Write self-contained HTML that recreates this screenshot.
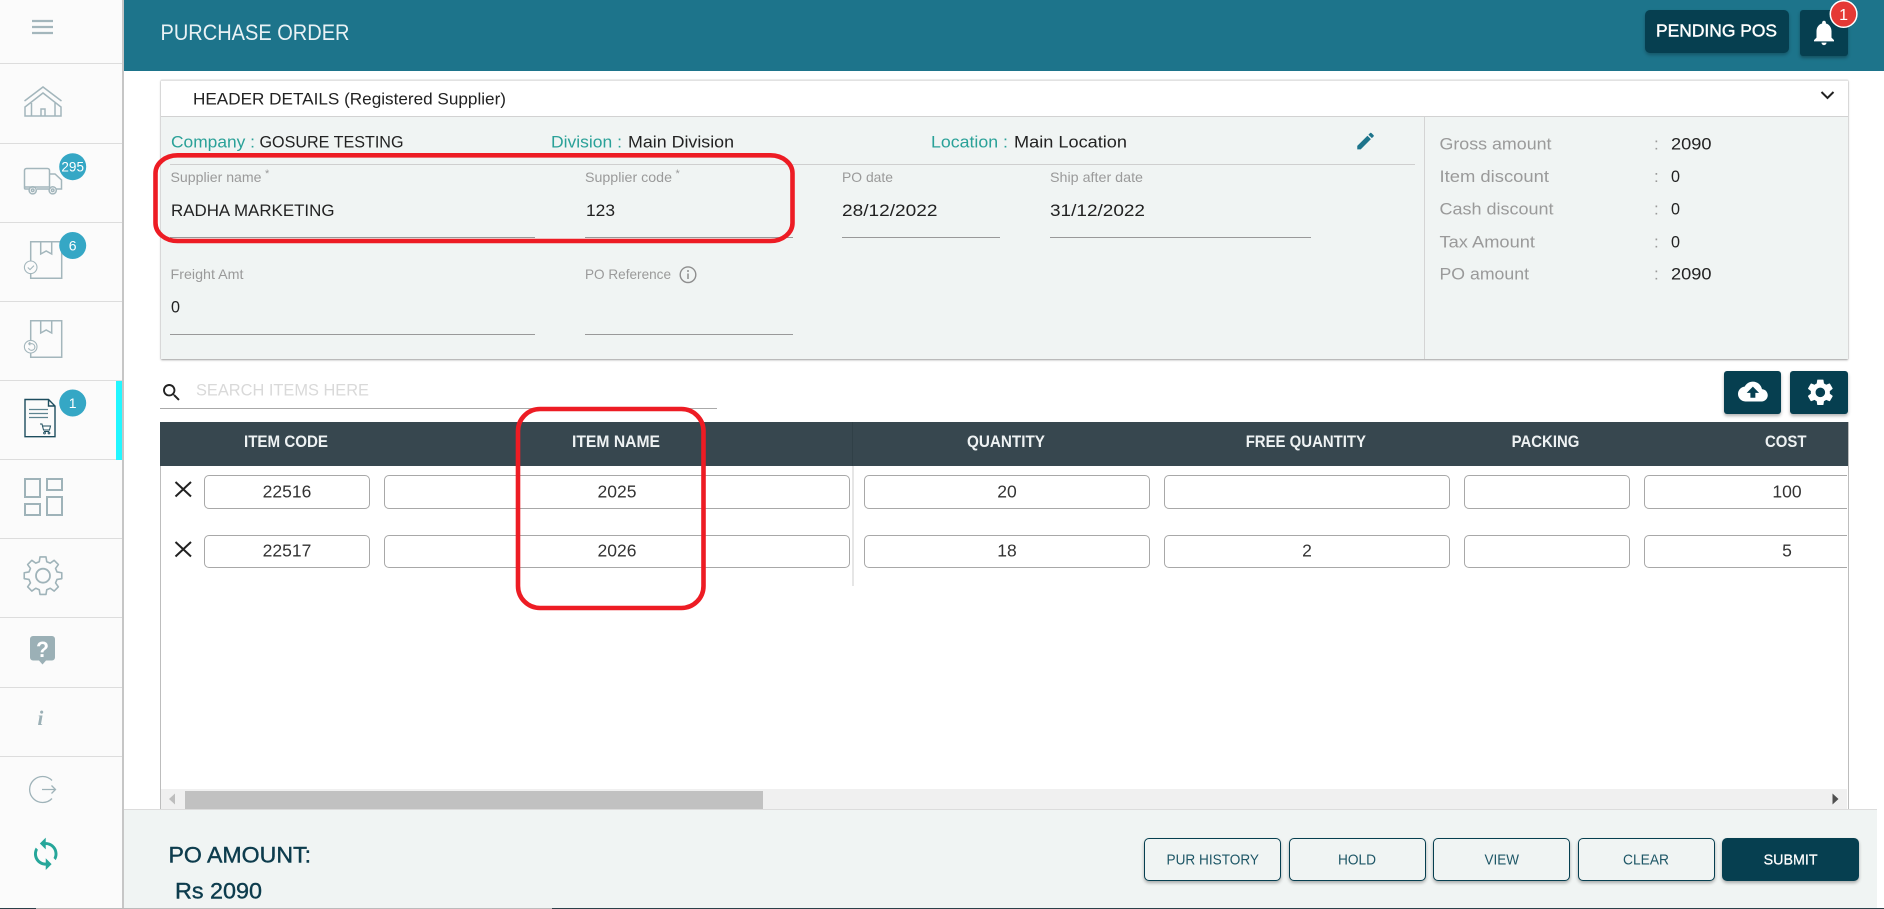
<!DOCTYPE html>
<html lang="en"><head><meta charset="utf-8"><title>Purchase Order</title>
<style>
html,body{margin:0;padding:0;background:#fff}
body{position:relative;width:1884px;height:909px;overflow:hidden;font-family:"Liberation Sans",sans-serif}
.a{position:absolute;box-sizing:border-box}
.in{position:absolute;box-sizing:border-box;background:#fff;border:1px solid #a8a8a8;border-radius:5px}
.btn{position:absolute;box-sizing:border-box;top:838px;height:43px;border:1px solid #063f50;border-radius:5px;background:#f0f4f3;box-shadow:0 2px 3px rgba(0,0,0,.3)}
svg{position:absolute;left:0;top:0}
text{font-family:"Liberation Sans",sans-serif}
</style></head><body>
<!-- sidebar -->
<div class="a" style="left:0;top:0;width:122px;height:909px;background:#fbfbfb"></div>
<div class="a" style="left:122px;top:0;width:2px;height:909px;background:#c6c6c6"></div>
<div class="a" style="left:0;top:63px;width:122px;height:1px;background:#ddd"></div>
<div class="a" style="left:0;top:143px;width:122px;height:1px;background:#ddd"></div>
<div class="a" style="left:0;top:222px;width:122px;height:1px;background:#ddd"></div>
<div class="a" style="left:0;top:301px;width:122px;height:1px;background:#ddd"></div>
<div class="a" style="left:0;top:380px;width:122px;height:1px;background:#ddd"></div>
<div class="a" style="left:0;top:459px;width:122px;height:1px;background:#ddd"></div>
<div class="a" style="left:0;top:538px;width:122px;height:1px;background:#ddd"></div>
<div class="a" style="left:0;top:617px;width:122px;height:1px;background:#ddd"></div>
<div class="a" style="left:0;top:687px;width:122px;height:1px;background:#ddd"></div>
<div class="a" style="left:0;top:756px;width:122px;height:1px;background:#ddd"></div>
<div class="a" style="left:116px;top:381px;width:6px;height:79px;background:#22f6ff"></div>
<!-- header -->
<div class="a" style="left:124px;top:0;width:1760px;height:71px;background:#1d748b"></div>
<div class="a" style="left:1645px;top:10px;width:144px;height:43px;background:#063f50;border-radius:5px;box-shadow:0 2px 3px rgba(0,0,0,.25)"></div>
<div class="a" style="left:1800px;top:10px;width:48px;height:46px;background:#063f50;border-radius:3px;box-shadow:0 2px 3px rgba(0,0,0,.3)"></div>
<!-- card -->
<div class="a" style="left:161px;top:80px;width:1687px;height:279px;background:#f0f4f3;box-shadow:0 1px 2px rgba(0,0,0,.35),0 0 1px rgba(0,0,0,.25)"></div>
<div class="a" style="left:161px;top:80px;width:1687px;height:37px;background:#fff;border-top:1px solid #e2e2e2;border-bottom:1px solid #d2d2d2"></div>
<div class="a" style="left:170px;top:164px;width:1245px;height:1px;background:#cfcfcf"></div>
<div class="a" style="left:1424px;top:117px;width:1px;height:242px;background:#d4d4d4"></div>
<div class="a" style="left:170px;top:237px;width:365px;height:1px;background:#999"></div>
<div class="a" style="left:585px;top:237px;width:208px;height:1px;background:#999"></div>
<div class="a" style="left:842px;top:237px;width:158px;height:1px;background:#999"></div>
<div class="a" style="left:1050px;top:237px;width:261px;height:1px;background:#999"></div>
<div class="a" style="left:170px;top:334px;width:365px;height:1px;background:#999"></div>
<div class="a" style="left:585px;top:334px;width:208px;height:1px;background:#999"></div>
<!-- search + action buttons -->
<div class="a" style="left:160px;top:408px;width:557px;height:1px;background:#aaa"></div>
<div class="a" style="left:1724px;top:371px;width:57px;height:43px;background:#063f50;border-radius:3px;box-shadow:0 2px 3px rgba(0,0,0,.3)"></div>
<div class="a" style="left:1790px;top:371px;width:58px;height:43px;background:#063f50;border-radius:3px;box-shadow:0 2px 3px rgba(0,0,0,.3)"></div>
<!-- table -->
<div class="a" style="left:160px;top:422px;width:1px;height:387px;background:#bdbdbd"></div>
<div class="a" style="left:1848px;top:422px;width:1px;height:387px;background:#bdbdbd"></div>
<div class="a" style="left:160px;top:422px;width:1688px;height:44px;background:#37474f"></div>
<div class="a" style="left:852px;top:422px;width:1px;height:44px;background:#304047"></div>
<div class="a" style="left:852px;top:466px;width:2px;height:120px;background:#e6e6e6"></div>
<div class="in" style="left:204px;top:475px;width:166px;height:34px"></div>
<div class="in" style="left:384px;top:475px;width:466px;height:34px"></div>
<div class="in" style="left:864px;top:475px;width:286px;height:34px"></div>
<div class="in" style="left:1164px;top:475px;width:286px;height:34px"></div>
<div class="in" style="left:1464px;top:475px;width:166px;height:34px"></div>
<div class="in" style="left:1644px;top:475px;width:210px;height:34px"></div>
<div class="in" style="left:204px;top:535px;width:166px;height:33px"></div>
<div class="in" style="left:384px;top:535px;width:466px;height:33px"></div>
<div class="in" style="left:864px;top:535px;width:286px;height:33px"></div>
<div class="in" style="left:1164px;top:535px;width:286px;height:33px"></div>
<div class="in" style="left:1464px;top:535px;width:166px;height:33px"></div>
<div class="in" style="left:1644px;top:535px;width:210px;height:33px"></div>
<div class="a" style="left:1847px;top:466px;width:37px;height:343px;background:#fff"></div>
<div class="a" style="left:1848px;top:466px;width:1px;height:343px;background:#bdbdbd"></div>
<!-- scrollbar -->
<div class="a" style="left:161px;top:789px;width:1686px;height:20px;background:#f0f0f0"></div>
<div class="a" style="left:185px;top:791px;width:578px;height:18px;background:#c1c1c1"></div>
<!-- footer -->
<div class="a" style="left:124px;top:809px;width:1753px;height:99px;background:#f0f4f3;border-top:1px solid #dcdcdc"></div>
<div class="btn" style="left:1144px;width:137px"></div>
<div class="btn" style="left:1289px;width:137px"></div>
<div class="btn" style="left:1433px;width:137px"></div>
<div class="btn" style="left:1578px;width:137px"></div>
<div class="btn" style="left:1722px;width:137px;background:#063f50"></div>
<div class="a" style="left:0;top:908px;width:1884px;height:1px;background:#2b4149"></div>
<div class="a" style="left:36px;top:908px;width:516px;height:1px;background:#bbb"></div>

<svg width="1884" height="909" viewBox="0 0 1884 909" xmlns="http://www.w3.org/2000/svg">
<!-- sidebar icons -->
<g fill="none" stroke="#a3b6bc" stroke-width="1.5">
<path d="M32 21h21M32 27h21M32 33h21" stroke-width="2.2"/>
<path d="M24.500 101L43 87l18.500 14M25 116v-9l18-14 18 14v9zM31.500 103v13M55 103v13M41 116v-7h4v7"/>
<path d="M26.500 168.500h21a2 2 0 0 1 2 2v16.500h-25v-16.500a2 2 0 0 1 2-2zM50 174h5l6.500 6v9h-5M50 187v2M24.500 186v2a1 1 0 0 0 1 1h3.500M37 189h12"/>
<circle cx="32.700" cy="190.300" r="3.600"/><circle cx="32.700" cy="190.300" r="1.300"/><circle cx="52.700" cy="190.300" r="3.600"/><circle cx="52.700" cy="190.300" r="1.300"/>
<path d="M30.700 241.700H61.700V278.300H30.700zM40.700 241.700V254L46.200 251L51.700 254V241.700"/>
<circle cx="30.700" cy="267.300" r="6.300" fill="#fbfbfb" stroke-width="1.100"/><path d="M27.800 267.500l2.200 2.100 4-4" stroke-width="1.100"/>
<path d="M30.700 320.700H61.700V357.300H30.700zM40.700 320.700V333L46.200 330L51.700 333V320.700"/>
<circle cx="30.700" cy="346.700" r="6.300" fill="#fbfbfb" stroke-width="1.100"/><path d="M28.500 343.700h3a3.300 3.300 0 1 1-3 4.500M28.500 343.700l1.800-1.500M28.500 343.700l1.800 1.500" stroke-width="1.100"/>
</g>
<g fill="none" stroke="#1d4d5e" stroke-width="1.400">
<path d="M25 399.500H48.500L55 406V436.700H25zM48.500 399.500V406H55"/>
<path d="M29 409.500H48M29 413.500H48M29 417.500H48" stroke="#5d8490" stroke-width="1.300"/>
<path d="M40 424h2l1.500 6h6l1-4h-7.500M44 431.500h5" stroke-width="1"/><circle cx="44.500" cy="433" r=".9" stroke-width=".9"/><circle cx="49" cy="433" r=".9" stroke-width=".9"/>
</g>
<g fill="none" stroke="#9fb3b9" stroke-width="2">
<rect x="25" y="479" width="15" height="18"/><rect x="47" y="479" width="15" height="11"/><rect x="25" y="504" width="15" height="11"/><rect x="47" y="497" width="15" height="18"/>
<path transform="translate(43 575.700)" stroke-width="1.600" stroke-linejoin="round" d="M14 -3.750L18.770 -2.970L18.770 2.970L14 3.750L12.560 7.250L15.370 11.170L11.170 15.370L7.250 12.560L3.750 14L2.970 18.770L-2.970 18.770L-3.750 14L-7.250 12.560L-11.170 15.370L-15.370 11.170L-12.560 7.250L-14 3.750L-18.770 2.970L-18.770 -2.970L-14 -3.750L-12.560 -7.250L-15.370 -11.170L-11.170 -15.370L-7.250 -12.560L-3.750 -14L-2.970 -18.770L2.970 -18.770L3.750 -14L7.250 -12.560L11.170 -15.370L15.370 -11.170L12.560 -7.250Z"/>
<circle cx="43" cy="575.700" r="7" stroke-width="1.800"/>
<path d="M52 780.500A13 13 0 1 0 52 798.500M42 789.500H55.500M51.500 785.500l4 4-4 4" stroke-width="1.300"/>
</g>
<path fill="#9bb0b6" d="M33 636h19a3 3 0 0 1 3 3v18.500a3 3 0 0 1-3 3h-6l-3.500 4-3.500-4h-6a3 3 0 0 1-3-3V639a3 3 0 0 1 3-3z"/>
<text x="36" y="657" font-size="22" font-weight="700" fill="#fff" textLength="13" lengthAdjust="spacingAndGlyphs">?</text>
<text x="37.500" y="725" font-size="21" font-weight="700" font-style="italic" fill="#9bb0b6" style="font-family:'Liberation Serif',serif">i</text>
<path fill="#26a69a" transform="translate(28.100 836.200) scale(1.470)" d="M12 4V1L8 5l4 4V6c3.310 0 6 2.690 6 6 0 1.010-.25 1.970-.7 2.800l1.460 1.460C19.540 15.030 20 13.570 20 12c0-4.420-3.580-8-8-8zm0 14c-3.310 0-6-2.690-6-6 0-1.010.25-1.970.7-2.800L5.240 7.740C4.460 8.970 4 10.430 4 12c0 4.420 3.580 8 8 8v3l4-4-4-4v3z"/>
<g fill="#35a7c5"><circle cx="72.700" cy="166.700" r="13.500"/><circle cx="72.700" cy="245.500" r="13.500"/><circle cx="72.700" cy="403" r="13.500"/></g>
<g fill="#fff" font-size="14" text-anchor="middle"><text x="72.700" y="171.500" font-size="13.500">295</text><text x="72.700" y="250.500">6</text><text x="72.700" y="408">1</text></g>

<!-- header -->
<text x="160.500" y="40" font-size="22" fill="#e9f2f5" textLength="189" lengthAdjust="spacingAndGlyphs">PURCHASE ORDER</text>
<text x="1656" y="36.700" font-size="17.500" fill="#fff" stroke="#fff" stroke-width=".4" textLength="121" lengthAdjust="spacingAndGlyphs">PENDING POS</text>
<path fill="#fff" transform="translate(1809 17.600) scale(1.250)" d="M12 22c1.100 0 2-.9 2-2h-4c0 1.100.89 2 2 2zm6-6v-5c0-3.070-1.640-5.640-4.500-6.320V4c0-.83-.67-1.500-1.500-1.500s-1.500.67-1.500 1.500v.68C7.630 5.360 6 7.920 6 11v5l-2 2v1h16v-1l-2-2z"/>
<circle cx="1843.600" cy="14" r="13.300" fill="#e53935" stroke="#fff" stroke-width="1.500"/>
<text x="1843.600" y="20" font-size="16" fill="#fff" text-anchor="middle">1</text>

<!-- card heading -->
<text x="193" y="104.500" font-size="17" fill="#222" textLength="313" lengthAdjust="spacingAndGlyphs">HEADER DETAILS (Registered Supplier)</text>
<path d="M1821.500 92l6 6 6-6" fill="none" stroke="#222" stroke-width="2"/>
<g font-size="17">
<text x="171" y="147.500" fill="#2aa198" textLength="84" lengthAdjust="spacingAndGlyphs">Company :</text>
<text x="259.500" y="147.500" fill="#222" textLength="144" lengthAdjust="spacingAndGlyphs">GOSURE TESTING</text>
<text x="551" y="147.500" fill="#2aa198" textLength="71" lengthAdjust="spacingAndGlyphs">Division :</text>
<text x="628" y="147.500" fill="#222" textLength="106" lengthAdjust="spacingAndGlyphs">Main Division</text>
<text x="931" y="147.500" fill="#2aa198" textLength="77" lengthAdjust="spacingAndGlyphs">Location :</text>
<text x="1014" y="147.500" fill="#222" textLength="113" lengthAdjust="spacingAndGlyphs">Main Location</text>
</g>
<path fill="#1d748b" transform="translate(1354.500 130) scale(.92)" d="M3 17.250V21h3.750L17.810 9.940l-3.750-3.750L3 17.250zM20.710 7.040c.39-.39.39-1.020 0-1.410l-2.340-2.340c-.39-.39-1.020-.39-1.410 0l-1.830 1.830 3.750 3.750 1.830-1.830z"/>

<!-- form labels -->
<g font-size="14" fill="#9a9a9a">
<text x="170.500" y="182" textLength="91" lengthAdjust="spacingAndGlyphs">Supplier name</text>
<text x="265" y="177" font-size="11">*</text>
<text x="585" y="182" textLength="87" lengthAdjust="spacingAndGlyphs">Supplier code</text>
<text x="675.500" y="177" font-size="11">*</text>
<text x="842" y="182" textLength="51" lengthAdjust="spacingAndGlyphs">PO date</text>
<text x="1050" y="182" textLength="93" lengthAdjust="spacingAndGlyphs">Ship after date</text>
<text x="170.500" y="279" textLength="73" lengthAdjust="spacingAndGlyphs">Freight Amt</text>
<text x="585" y="279" textLength="86" lengthAdjust="spacingAndGlyphs">PO Reference</text>
</g>
<circle cx="688" cy="274.700" r="7.800" fill="none" stroke="#8e8e8e" stroke-width="1.400"/>
<path d="M688 273.500v5.500M688 270v2" stroke="#8e8e8e" stroke-width="1.500" fill="none"/>
<g font-size="17" fill="#222">
<text x="171" y="215.800" textLength="163.500" lengthAdjust="spacingAndGlyphs">RADHA MARKETING</text>
<text x="586" y="215.800" textLength="29" lengthAdjust="spacingAndGlyphs">123</text>
<text x="842" y="215.800" textLength="95.500" lengthAdjust="spacingAndGlyphs">28/12/2022</text>
<text x="1050" y="215.800" textLength="95" lengthAdjust="spacingAndGlyphs">31/12/2022</text>
<text x="171" y="312.500" textLength="9" lengthAdjust="spacingAndGlyphs">0</text>
</g>
<!-- summary -->
<g font-size="17" fill="#9a9a9a">
<text x="1439.500" y="149.500" textLength="112" lengthAdjust="spacingAndGlyphs">Gross amount</text>
<text x="1439.500" y="182" textLength="109.500" lengthAdjust="spacingAndGlyphs">Item discount</text>
<text x="1439.500" y="214.500" textLength="114" lengthAdjust="spacingAndGlyphs">Cash discount</text>
<text x="1439.500" y="247.500" textLength="95.500" lengthAdjust="spacingAndGlyphs">Tax Amount</text>
<text x="1439.500" y="279.500" textLength="89.500" lengthAdjust="spacingAndGlyphs">PO amount</text>
<text x="1654" y="149.500">:</text><text x="1654" y="182">:</text><text x="1654" y="214.500">:</text><text x="1654" y="247.500">:</text><text x="1654" y="279.500">:</text>
</g>
<g font-size="17" fill="#222">
<text x="1671" y="149.500" textLength="40.500" lengthAdjust="spacingAndGlyphs">2090</text>
<text x="1671" y="182" textLength="9" lengthAdjust="spacingAndGlyphs">0</text><text x="1671" y="214.500" textLength="9" lengthAdjust="spacingAndGlyphs">0</text><text x="1671" y="247.500" textLength="9" lengthAdjust="spacingAndGlyphs">0</text>
<text x="1671" y="279.500" textLength="40.500" lengthAdjust="spacingAndGlyphs">2090</text>
</g>

<!-- search -->
<path fill="#222" transform="translate(160.200 381.200) scale(.95)" d="M15.500 14h-.79l-.28-.27C15.410 12.590 16 11.110 16 9.500 16 5.910 13.090 3 9.500 3S3 5.910 3 9.500 5.910 16 9.500 16c1.610 0 3.090-.59 4.230-1.570l.27.28v.79l5 4.990L20.490 19l-4.990-5zm-6 0C7.010 14 5 11.990 5 9.500S7.010 5 9.500 5 14 7.010 14 9.500 11.990 14 9.500 14z"/>
<text x="196" y="395.700" font-size="17" fill="#d9d9d9" textLength="173" lengthAdjust="spacingAndGlyphs">SEARCH ITEMS HERE</text>
<path fill="#fff" transform="translate(1738 376.700) scale(1.240)" d="M19.350 10.040C18.670 6.590 15.640 4 12 4 9.110 4 6.600 5.640 5.350 8.040 2.340 8.360 0 10.910 0 14c0 3.310 2.690 6 6 6h13c2.760 0 5-2.240 5-5 0-2.640-2.050-4.780-4.650-4.960zM14 13v4h-4v-4H7l5-5 5 5h-3z"/>
<path fill="#fff" transform="translate(1804.500 376.500) scale(1.320)" d="M19.140 12.940c.04-.3.06-.61.06-.94 0-.32-.02-.64-.07-.94l2.030-1.580c.18-.14.23-.41.12-.61l-1.920-3.320c-.12-.22-.37-.29-.59-.22l-2.390.96c-.5-.38-1.030-.7-1.620-.94l-.36-2.540c-.04-.24-.24-.41-.48-.41h-3.840c-.24 0-.43.17-.47.41l-.36 2.540c-.59.24-1.130.57-1.620.94l-2.390-.96c-.22-.08-.47 0-.59.22L2.740 8.870c-.12.21-.08.47.12.61l2.030 1.580c-.05.3-.09.63-.09.94s.02.64.07.94l-2.030 1.580c-.18.14-.23.41-.12.61l1.920 3.320c.12.22.37.29.59.22l2.390-.96c.5.38 1.030.7 1.620.94l.36 2.540c.05.24.24.41.48.41h3.840c.24 0 .44-.17.47-.41l.36-2.540c.59-.24 1.130-.56 1.620-.94l2.390.96c.22.08.47 0 .59-.22l1.920-3.320c.12-.22.07-.47-.12-.61l-2.010-1.580zM12 15.600c-1.980 0-3.600-1.620-3.600-3.600s1.620-3.600 3.600-3.600 3.600 1.620 3.600 3.600-1.620 3.600-3.600 3.600z"/>

<!-- table heads -->
<g font-size="16.500" font-weight="700" fill="#eef2f3">
<text x="244" y="447" textLength="84" lengthAdjust="spacingAndGlyphs">ITEM CODE</text>
<text x="572" y="447" textLength="88" lengthAdjust="spacingAndGlyphs">ITEM NAME</text>
<text x="967" y="447" textLength="78" lengthAdjust="spacingAndGlyphs">QUANTITY</text>
<text x="1245.700" y="447" textLength="120.300" lengthAdjust="spacingAndGlyphs">FREE QUANTITY</text>
<text x="1511.600" y="447" textLength="67.800" lengthAdjust="spacingAndGlyphs">PACKING</text>
<text x="1765" y="447" textLength="41.500" lengthAdjust="spacingAndGlyphs">COST</text>
</g>
<path d="M175.500 482l15.500 14.500M191 482l-15.500 14.500M175.500 542l15.500 14.500M191 542l-15.500 14.500" stroke="#222" stroke-width="2" fill="none"/>
<g font-size="17.500" fill="#333" text-anchor="middle">
<text x="287" y="497.500">22516</text><text x="617" y="497.500">2025</text><text x="1007" y="497.500">20</text><text x="1787" y="497.500">100</text>
<text x="287" y="556.500">22517</text><text x="617" y="556.500">2026</text><text x="1007" y="556.500">18</text><text x="1307" y="556.500">2</text><text x="1787" y="556.500">5</text>
</g>
<path d="M175 796.500v11l-6-5.500z" fill="#bdbdbd" transform="translate(0 -3)"/>
<path d="M1832.500 796.500v11l6-5.500z" fill="#505050" transform="translate(0 -3)"/>

<!-- footer text -->
<g font-size="22.500" fill="#0d3c4d" stroke="#0d3c4d" stroke-width=".4">
<text x="168.500" y="862.500" textLength="142.500" lengthAdjust="spacingAndGlyphs">PO AMOUNT:</text>
<text x="175" y="898.700" textLength="87" lengthAdjust="spacingAndGlyphs">Rs 2090</text>
</g>
<g font-size="15" fill="#1d5666">
<text x="1166.500" y="864.300" textLength="92.500" lengthAdjust="spacingAndGlyphs">PUR HISTORY</text>
<text x="1338" y="864.300" textLength="38" lengthAdjust="spacingAndGlyphs">HOLD</text>
<text x="1484.500" y="864.300" textLength="34.500" lengthAdjust="spacingAndGlyphs">VIEW</text>
<text x="1623" y="864.300" textLength="46" lengthAdjust="spacingAndGlyphs">CLEAR</text>
<text x="1763.600" y="864.300" fill="#fff" stroke="#fff" stroke-width=".25" textLength="54" lengthAdjust="spacingAndGlyphs">SUBMIT</text>
</g>

<!-- red annotations -->
<rect x="155.500" y="155.300" width="637" height="85.700" rx="22" ry="18" fill="none" stroke="#ed1c24" stroke-width="4.600"/>
<rect x="518" y="409" width="185.500" height="199" rx="22" ry="22" fill="none" stroke="#ed1c24" stroke-width="4.600"/>
</svg>
</body></html>
